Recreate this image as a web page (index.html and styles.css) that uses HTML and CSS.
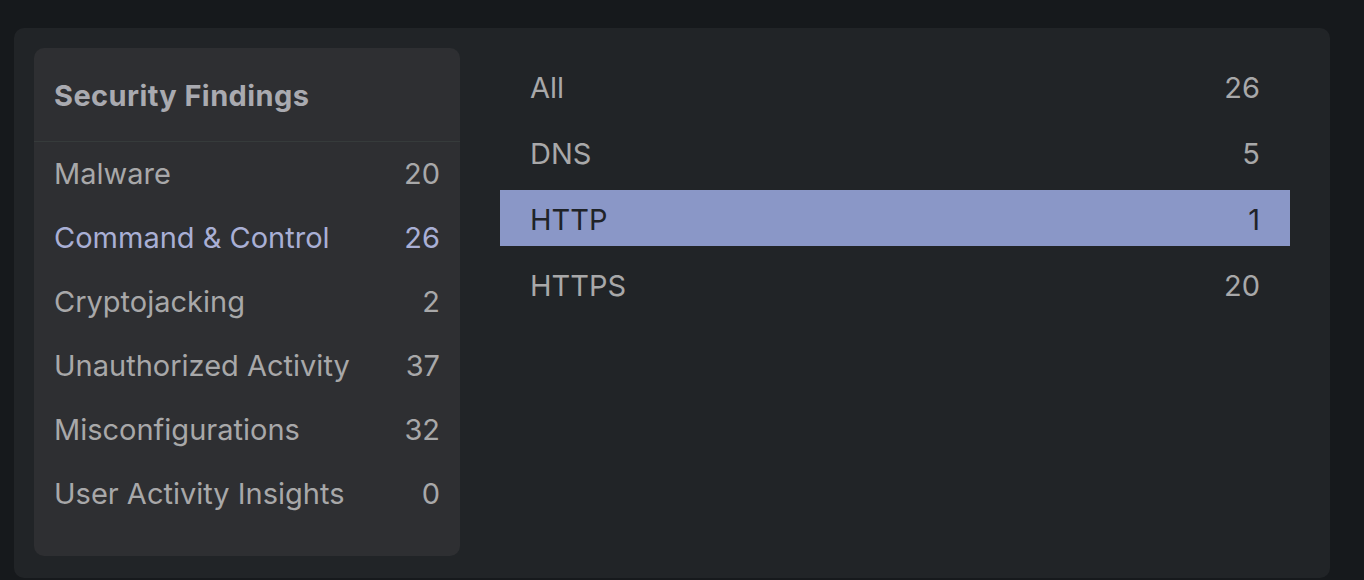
FILE: index.html
```html
<!DOCTYPE html>
<html>
<head>
<meta charset="utf-8">
<link rel="stylesheet" href="styles.css">
</head>
<body>
<div class="card">
  <aside class="panel">
    <div class="panel-header">Security Findings</div>
    <ul class="cat-list">
      <li class="cat"><span>Malware</span><span>20</span></li>
      <li class="cat active"><span>Command &amp; Control</span><span>26</span></li>
      <li class="cat"><span>Cryptojacking</span><span>2</span></li>
      <li class="cat"><span>Unauthorized Activity</span><span>37</span></li>
      <li class="cat"><span>Misconfigurations</span><span>32</span></li>
      <li class="cat"><span>User Activity Insights</span><span>0</span></li>
    </ul>
  </aside>
  <ul class="sub-list">
    <li class="sub"><span>All</span><span>26</span></li>
    <li class="sub"><span>DNS</span><span>5</span></li>
    <li class="sub selected"><span>HTTP</span><span>1</span></li>
    <li class="sub"><span>HTTPS</span><span>20</span></li>
  </ul>
</div>
</body>
</html>
```
FILE: styles.css
```css
* { box-sizing: border-box; }
html, body {
  margin: 0;
  padding: 0;
  background: #16191c;
  font-family: Inter, "Noto Sans", "Liberation Sans", sans-serif;
  font-size: 29px;
  color: #a8a8a9;
}
body {
  padding: 28px 0 0 14px;
  height: 580px;
  overflow: hidden;
}
.card {
  width: 1316px;
  height: 550px;
  background: #212427;
  border-radius: 10px;
  padding: 20px 40px 21px 20px;
  display: flex;
  gap: 40px;
  align-items: flex-start;
}
.panel {
  width: 426px;
  height: 508px;
  background: #2e2f32;
  border-radius: 10px;
  flex-shrink: 0;
}
.panel-header {
  height: 94px;
  padding: 2px 20px 0;
  display: flex;
  align-items: center;
  font-weight: 700;
  letter-spacing: 0.4px;
  color: #a9aab0;
  border-bottom: 1px solid #363b3b;
}
.cat-list, .sub-list {
  list-style: none;
  margin: 0;
  padding: 0;
}
.cat {
  height: 64px;
  padding: 0 20px 1px;
  display: flex;
  align-items: center;
  justify-content: space-between;
}
.cat.active {
  color: #a9afd5;
}
.sub-list {
  flex: 1;
  margin-top: 10px;
  display: flex;
  flex-direction: column;
  gap: 10px;
}
.sub {
  height: 56px;
  padding: 3px 30px 0;
  display: flex;
  align-items: center;
  justify-content: space-between;
}
.sub.selected {
  background: #8a97c7;
  color: #1f2328;
}
```
